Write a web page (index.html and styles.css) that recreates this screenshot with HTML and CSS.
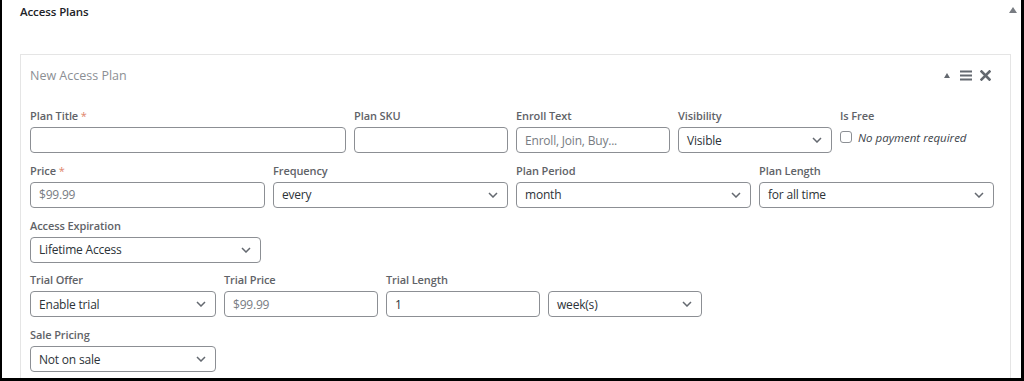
FILE: index.html
```html
<!DOCTYPE html>
<html lang="en">
<head>
    <meta charset="UTF-8">
    <title>Access Plans</title>
    <link rel="stylesheet" href="styles.css">
</head>
<body>
    <div class="frame">
        <div class="postbox-header">
            <h2 class="postbox-title">Access Plans</h2>
            <span class="toggle-arrow"></span>
        </div>

        <div class="plan">
            <div class="plan-header">
                <span class="plan-name">New Access Plan</span>
                <div class="plan-tools">
                    <span class="tool-up"></span>
                    <svg class="tool-menu" width="12" height="11" viewBox="0 0 12 11">
                        <rect x="0" y="0.5" width="12" height="2" fill="#646970"/>
                        <rect x="0" y="4.5" width="12" height="2" fill="#646970"/>
                        <rect x="0" y="8.5" width="12" height="2" fill="#646970"/>
                    </svg>
                    <svg class="tool-close" width="11" height="11" viewBox="0 0 11 11">
                        <path d="M1.5 1.5 L9.5 9.5 M9.5 1.5 L1.5 9.5" stroke="#646970" stroke-width="2.6" stroke-linecap="square"/>
                    </svg>
                </div>
            </div>

            <div class="row">
                <div class="field w-2of6">
                    <label>Plan Title <span class="req">*</span></label>
                    <input class="input" type="text">
                </div>
                <div class="field w-1of6">
                    <label>Plan SKU</label>
                    <input class="input" type="text">
                </div>
                <div class="field w-1of6">
                    <label>Enroll Text</label>
                    <input class="input" type="text" placeholder="Enroll, Join, Buy...">
                </div>
                <div class="field w-1of6">
                    <label>Visibility</label>
                    <div class="select">Visible</div>
                </div>
                <div class="field w-1of6">
                    <label>Is Free</label>
                    <div class="checkbox-line">
                        <span class="checkbox"></span>
                        <em>No payment required</em>
                    </div>
                </div>
            </div>

            <div class="row">
                <div class="field w-1of4">
                    <label>Price <span class="req">*</span></label>
                    <input class="input" type="text" placeholder="$99.99">
                </div>
                <div class="field w-1of4">
                    <label>Frequency</label>
                    <div class="select">every</div>
                </div>
                <div class="field w-1of4">
                    <label>Plan Period</label>
                    <div class="select">month</div>
                </div>
                <div class="field w-1of4">
                    <label>Plan Length</label>
                    <div class="select">for all time</div>
                </div>
            </div>

            <div class="row">
                <div class="field w-expire">
                    <label>Access Expiration</label>
                    <div class="select">Lifetime Access</div>
                </div>
            </div>

            <div class="row">
                <div class="field w-1of5">
                    <label>Trial Offer</label>
                    <div class="select">Enable trial</div>
                </div>
                <div class="field w-1of6">
                    <label>Trial Price</label>
                    <input class="input" type="text" placeholder="$99.99">
                </div>
                <div class="field w-1of6">
                    <label>Trial Length</label>
                    <input class="input" type="text" value="1">
                </div>
                <div class="field w-1of6">
                    <label class="blank">&nbsp;</label>
                    <div class="select">week(s)</div>
                </div>
            </div>

            <div class="row">
                <div class="field w-1of5">
                    <label>Sale Pricing</label>
                    <div class="select">Not on sale</div>
                </div>
            </div>
        </div>
    </div>
</body>
</html>
```

FILE: styles.css
```css
body, html {
    margin: 0;
    height: 100%;
    overflow: hidden;
    background: #fff;
    font-family: 'Open Sans', 'Noto Sans', sans-serif;
    color: #3c434a;
}

.frame {
    box-sizing: border-box;
    height: 381px;
    border-left: 2px solid #000;
    border-right: 3px solid #000;
    border-bottom: 3px solid #000;
    padding: 0 10px 0 18px;
    overflow: hidden;
}

.postbox-header {
    display: flex;
    align-items: center;
    justify-content: space-between;
    height: 22px;
    margin-bottom: 32px;
}

.postbox-title {
    margin: 0;
    font-size: 11.5px;
    font-weight: 600;
    letter-spacing: -0.1px;
    color: #1d2327;
}

.toggle-arrow {
    width: 0;
    height: 0;
    margin-top: -2px;
    margin-right: -6px;
    border-left: 4px solid transparent;
    border-right: 4px solid transparent;
    border-bottom: 6px solid #787c82;
}

.plan {
    border: 1px solid #e5e5e5;
    border-bottom: none;
    padding: 0 14px 0 9px;
    height: 400px;
}

.plan-header {
    display: flex;
    align-items: center;
    justify-content: space-between;
    height: 40px;
    margin-bottom: 14px;
}

.plan-name {
    font-size: 12.5px;
    color: #8c8f94;
}

.plan-tools {
    display: flex;
    align-items: center;
    gap: 8px;
    margin-right: 5px;
}

.tool-up {
    width: 0;
    height: 0;
    border-left: 3px solid transparent;
    border-right: 3px solid transparent;
    border-bottom: 5px solid #646970;
    margin-right: 2px;
}

.row {
    display: flex;
    gap: 8px;
    margin-bottom: 10.75px;
}

.field {
    display: flex;
    flex-direction: column;
}

.field label {
    font-size: 11px;
    font-weight: 600;
    line-height: 14px;
    letter-spacing: -0.1px;
    color: #5f6368;
    margin-bottom: 4px;
}

.req {
    color: #e0836b;
    font-weight: 400;
}

.w-2of6 { width: 316px; }
.w-1of6 { width: 154px; }
.w-1of4 { width: 235px; }
.w-1of5 { width: 186px; }
.w-expire { width: 231px; }

.input, .select {
    box-sizing: border-box;
    height: 26px;
    width: 100%;
    margin: 0;
    border: 1px solid #8c8f94;
    border-radius: 4px;
    padding: 0 8px;
    font-family: inherit;
    font-size: 12px;
    letter-spacing: -0.2px;
    color: #2c3338;
    background: #fff;
}

.input::placeholder {
    color: #787c82;
}

.select {
    display: flex;
    align-items: center;
    background-image: url("data:image/svg+xml,%3Csvg xmlns='http://www.w3.org/2000/svg' width='10' height='6' viewBox='0 0 10 6'%3E%3Cpath d='M1 1l4 4 4-4' fill='none' stroke='%23646970' stroke-width='1.5'/%3E%3C/svg%3E");
    background-repeat: no-repeat;
    background-position: right 9px center;
}

.checkbox-line {
    display: flex;
    align-items: center;
    gap: 6px;
    height: 20px;
    font-size: 11.5px;
    color: #3c434a;
}

.checkbox {
    box-sizing: border-box;
    width: 12px;
    height: 12px;
    border: 1px solid #8c8f94;
    border-radius: 3px;
}
```
